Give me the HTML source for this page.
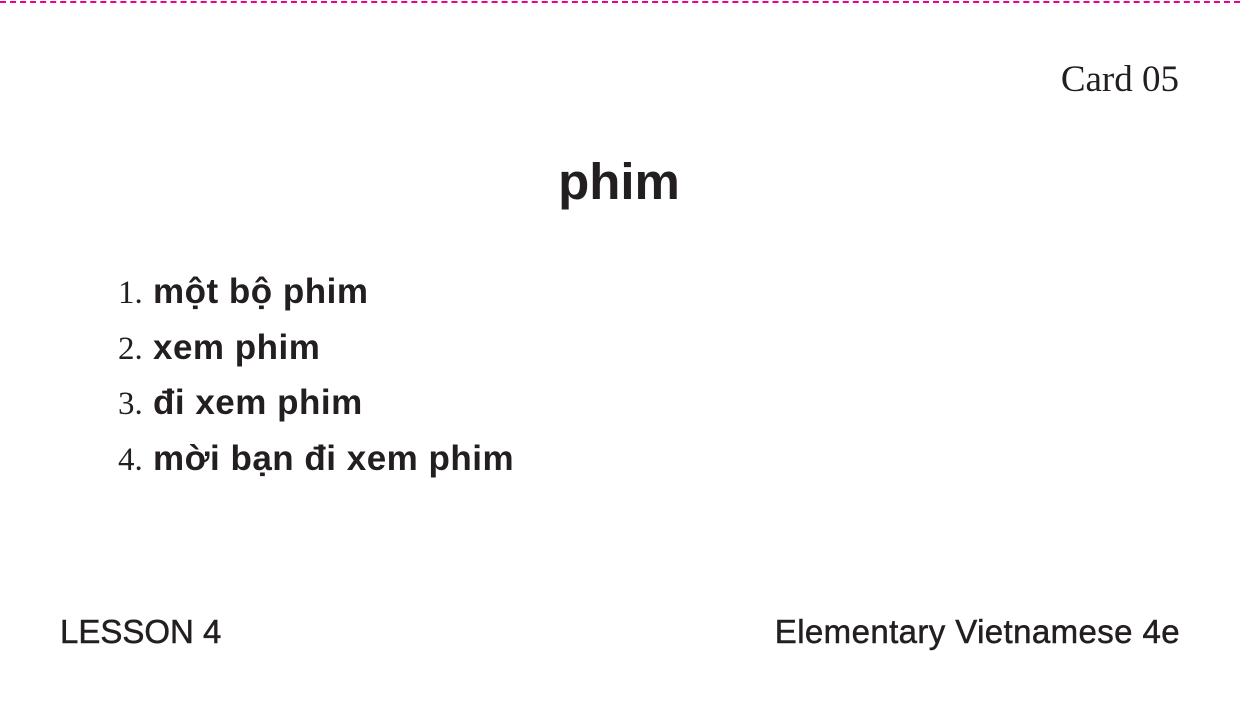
<!DOCTYPE html>
<html><head><meta charset="utf-8"><style>
body{margin:0;width:1240px;height:701px;background:#fff;position:relative;overflow:hidden;color:#231f20}
.dash{position:absolute;left:0;top:1px;width:1240px;height:0;border-top:2px dashed #ec008c}
.t{position:absolute;white-space:nowrap;line-height:1}
.serif{font-family:"Liberation Serif",serif}
.sans{font-family:"Liberation Sans",sans-serif}
.li{position:absolute;left:118px;white-space:nowrap;line-height:1}
.li .n{font-family:"Liberation Serif",serif;font-size:33px;margin-right:2px}
.li .w{font-family:"Liberation Sans",sans-serif;font-weight:bold;font-size:35px;letter-spacing:0.5px}
.ft{font-size:33px;-webkit-text-stroke:0.5px #231f20}
</style></head><body>
<div class="dash"></div>
<div class="t serif" style="right:61px;top:61px;font-size:37px">Card 05</div>
<div class="t sans" style="left:0;width:1238px;text-align:center;top:156px;font-size:51px;font-weight:bold">phim</div>
<div class="li" style="top:274px"><span class="n">1. </span><span class="w">một bộ phim</span></div>
<div class="li" style="top:330px"><span class="n">2. </span><span class="w">xem phim</span></div>
<div class="li" style="top:385px"><span class="n">3. </span><span class="w">đi xem phim</span></div>
<div class="li" style="top:441px"><span class="n">4. </span><span class="w">mời bạn đi xem phim</span></div>
<div class="t sans ft" style="left:60px;top:615px">LESSON 4</div>
<div class="t sans ft" style="right:60px;top:615px;letter-spacing:0.4px">Elementary Vietnamese 4e</div>
</body></html>
